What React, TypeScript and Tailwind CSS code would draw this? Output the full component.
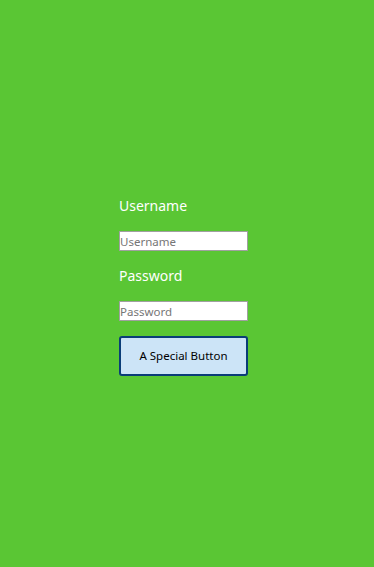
import React from "react";

// Simple login form on a green page
export default function App() {
  return (
    <div
      className="min-h-[567px] w-full bg-[#5ac634] pl-[119px] pt-[196px]"
      style={{ fontFamily: '"Noto Sans", "Open Sans", sans-serif' }}
    >
      <div className="flex w-[129px] flex-col">
        <label className="h-5 text-[14px] leading-5 text-white">Username</label>
        <input
          type="text"
          placeholder="Username"
          className="mt-[15px] h-5 w-[129px] border border-[#a0a0a0] bg-white px-0 text-[11.5px] leading-4 placeholder:text-[#767676] focus:outline-none"
        />
        <label className="mt-[15px] h-5 text-[14px] leading-5 text-white">Password</label>
        <input
          type="password"
          placeholder="Password"
          className="mt-[15px] h-5 w-[129px] border border-[#a0a0a0] bg-white px-0 text-[11.5px] leading-4 placeholder:text-[#767676] focus:outline-none"
        />
        <button className="mt-[15px] h-10 w-[129px] rounded-[3px] border-2 border-[#0a3d78] bg-[#cce4f7] text-[11.5px] text-black">
          A Special Button
        </button>
      </div>
    </div>
  );
}
